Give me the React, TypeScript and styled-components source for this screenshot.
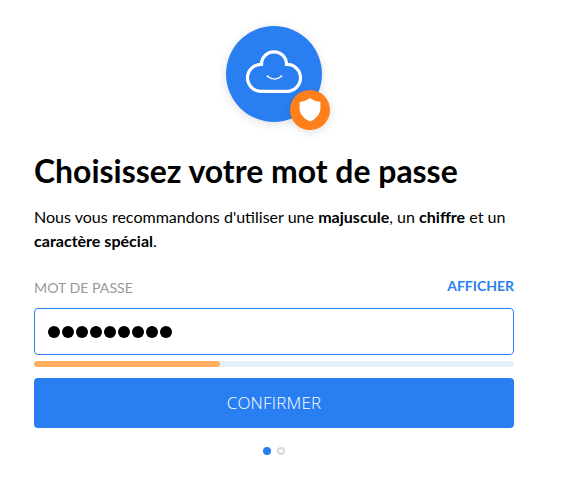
import React from 'react';
import styled, { createGlobalStyle } from 'styled-components';

const GlobalStyle = createGlobalStyle`
  * { box-sizing: border-box; }
  body { margin: 0; background: #fff; color: #000; font-family: Lato, sans-serif; }
`;

const Page = styled.main`
  width: 548px;
  height: 489px;
  padding: 26px 34px 0;
  display: flex;
  flex-direction: column;
`;

const Emblem = styled.div`
  position: relative;
  align-self: center;
  width: 96px;
  height: 96px;
  border-radius: 50%;
  background: #297ff2;
  box-shadow: 0 2px 10px rgba(0, 0, 0, 0.13);

  svg { display: block; }
`;

const Badge = styled.div`
  position: absolute;
  left: 64px;
  top: 64px;
  width: 40px;
  height: 40px;
  border-radius: 50%;
  background: #ff7f1b;
  box-shadow: 0 2px 10px rgba(0, 0, 0, 0.13);
`;

const Title = styled.h1`
  margin: 29px 0 0;
  font-size: 31.93px;
  line-height: 40px;
  font-weight: 700;
  white-space: nowrap;
`;

const Advice = styled.p`
  margin: 14px 0 0;
  font-size: 16.06px;
  line-height: 24px;
`;

const FieldHeader = styled.div`
  display: flex;
  justify-content: space-between;
  margin-top: 23px;
  height: 32px;
  line-height: 20px;
  font-size: 14.15px;
`;

const Label = styled.span`
  padding-top: 2px;
  color: #97999b;
`;

const RevealButton = styled.button`
  align-self: flex-start;
  padding: 0;
  border: 0;
  background: none;
  color: #297ff2;
  font: 700 14px/20px Lato, sans-serif;
`;

const PasswordField = styled.div`
  display: flex;
  align-items: center;
  gap: 2px;
  height: 47px;
  padding: 0 13px;
  border: 1px solid #297ff2;
  border-radius: 4px;
`;

const Bullet = styled.span`
  width: 12px;
  height: 12px;
  border-radius: 50%;
  background: #000;
`;

const Meter = styled.div`
  height: 6px;
  margin-top: 6px;
  border-radius: 3px;
  background: #e6f0f9;
  overflow: hidden;
`;

const MeterValue = styled.div`
  width: 186px;
  height: 100%;
  border-radius: 3px;
  background: #ffad60;
`;

const ConfirmButton = styled.button`
  height: 50px;
  margin-top: 11px;
  padding: 0;
  border: 0;
  border-radius: 4px;
  background: #297ff2;
  color: #fff;
  font: 300 17px/24px "Open Sans", sans-serif;
  letter-spacing: 0.2px;
`;

const Steps = styled.div`
  display: flex;
  justify-content: center;
  gap: 6px;
  margin-top: 19px;
`;

const Step = styled.span<{ $active?: boolean }>`
  width: 8px;
  height: 8px;
  border-radius: 50%;
  border: 2px solid ${({ $active }) => ($active ? '#297ff2' : '#d8d8d8')};
  background: ${({ $active }) => ($active ? '#297ff2' : '#fff')};
`;

export default function App() {
  return (
    <>
      <GlobalStyle />
      <Page>
        <Emblem>
          <svg width="96" height="96" viewBox="0 0 96 96" fill="none" stroke="#fff">
            <path d="M35 65.3a13.5 13.5 0 0 1 0-27h.5a12.5 12.5 0 0 1 25 0h.5a13.5 13.5 0 0 1 0 27Z" strokeWidth="3.2" />
            <path d="M41.7 50.6Q48.5 55.8 55.3 50.6M40.9 50.9l1.3-1.6M56.1 50.9l-1.3-1.6" strokeWidth="1.2" />
          </svg>
          <Badge>
            <svg width="40" height="40" viewBox="0 0 40 40">
              <path d="M20 8c3 2.2 6.5 3.5 10.4 4v6.2c0 5.5-3.6 10-10.4 13.4C13.2 28.2 9.6 23.7 9.6 18.2V12C13.5 11.5 17 10.2 20 8Z" fill="#fff" />
            </svg>
          </Badge>
        </Emblem>
        <Title>Choisissez votre mot de passe</Title>
        <Advice>
          Nous vous recommandons d'utiliser une <b>majuscule</b>, un <b>chiffre</b> et un{' '}
          <b>caractère spécial</b>.
        </Advice>
        <FieldHeader>
          <Label>MOT DE PASSE</Label>
          <RevealButton>AFFICHER</RevealButton>
        </FieldHeader>
        <PasswordField>
          {Array.from({ length: 9 }, (_, i) => <Bullet key={i} />)}
        </PasswordField>
        <Meter><MeterValue /></Meter>
        <ConfirmButton>CONFIRMER</ConfirmButton>
        <Steps><Step $active /><Step /></Steps>
      </Page>
    </>
  );
}
